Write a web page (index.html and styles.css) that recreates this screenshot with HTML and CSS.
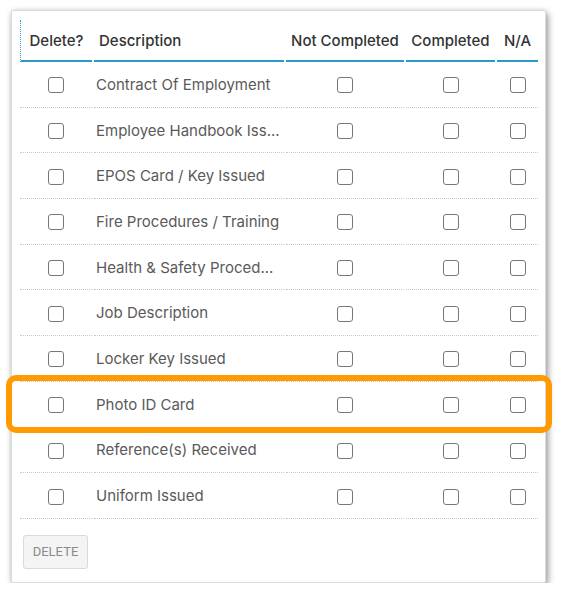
FILE: index.html
```html
<!DOCTYPE html>
<html lang="en">
<head>
  <meta charset="UTF-8" />
  <meta name="viewport" content="width=device-width, initial-scale=1.0" />
  <title>Induction Checklist</title>
  <link rel="stylesheet" href="styles.css">
</head>
<body>
  <div class="card">
    <table class="checklist">
      <colgroup>
        <col class="col-delete">
        <col class="col-desc">
        <col class="col-not">
        <col class="col-done">
        <col class="col-na">
      </colgroup>
      <thead>
        <tr>
          <th class="th-delete">Delete?</th>
          <th class="th-desc">Description</th>
          <th>Not Completed</th>
          <th>Completed</th>
          <th>N/A</th>
        </tr>
      </thead>
      <tbody>
        <tr>
          <td><input type="checkbox" class="check"></td>
          <td class="desc">Contract Of Employment</td>
          <td><input type="checkbox" class="check"></td>
          <td><input type="checkbox" class="check"></td>
          <td><input type="checkbox" class="check"></td>
        </tr>
        <tr>
          <td><input type="checkbox" class="check"></td>
          <td class="desc" title="Employee Handbook Issued">Employee Handbook Iss...</td>
          <td><input type="checkbox" class="check"></td>
          <td><input type="checkbox" class="check"></td>
          <td><input type="checkbox" class="check"></td>
        </tr>
        <tr>
          <td><input type="checkbox" class="check"></td>
          <td class="desc">EPOS Card / Key Issued</td>
          <td><input type="checkbox" class="check"></td>
          <td><input type="checkbox" class="check"></td>
          <td><input type="checkbox" class="check"></td>
        </tr>
        <tr>
          <td><input type="checkbox" class="check"></td>
          <td class="desc">Fire Procedures / Training</td>
          <td><input type="checkbox" class="check"></td>
          <td><input type="checkbox" class="check"></td>
          <td><input type="checkbox" class="check"></td>
        </tr>
        <tr>
          <td><input type="checkbox" class="check"></td>
          <td class="desc" title="Health &amp; Safety Procedures">Health &amp; Safety Proced...</td>
          <td><input type="checkbox" class="check"></td>
          <td><input type="checkbox" class="check"></td>
          <td><input type="checkbox" class="check"></td>
        </tr>
        <tr>
          <td><input type="checkbox" class="check"></td>
          <td class="desc">Job Description</td>
          <td><input type="checkbox" class="check"></td>
          <td><input type="checkbox" class="check"></td>
          <td><input type="checkbox" class="check"></td>
        </tr>
        <tr>
          <td><input type="checkbox" class="check"></td>
          <td class="desc">Locker Key Issued</td>
          <td><input type="checkbox" class="check"></td>
          <td><input type="checkbox" class="check"></td>
          <td><input type="checkbox" class="check"></td>
        </tr>
        <tr>
          <td><input type="checkbox" class="check"></td>
          <td class="desc">Photo ID Card</td>
          <td><input type="checkbox" class="check"></td>
          <td><input type="checkbox" class="check"></td>
          <td><input type="checkbox" class="check"></td>
        </tr>
        <tr>
          <td><input type="checkbox" class="check"></td>
          <td class="desc">Reference(s) Received</td>
          <td><input type="checkbox" class="check"></td>
          <td><input type="checkbox" class="check"></td>
          <td><input type="checkbox" class="check"></td>
        </tr>
        <tr>
          <td><input type="checkbox" class="check"></td>
          <td class="desc">Uniform Issued</td>
          <td><input type="checkbox" class="check"></td>
          <td><input type="checkbox" class="check"></td>
          <td><input type="checkbox" class="check"></td>
        </tr>
      </tbody>
    </table>

    <button class="delete-btn" disabled>DELETE</button>

    <!-- callout around the Photo ID Card row -->
    <div class="highlight"></div>
  </div>
</body>
</html>
```

FILE: styles.css
```css
* {
  margin: 0;
  padding: 0;
  box-sizing: border-box;
}

body {
  font-family: Inter, "Noto Sans", sans-serif;
  background: #fff;
}

.card {
  position: relative;
  width: 535px;
  height: 573px;
  margin: 10px 0 0 11px;
  padding: 9px 6px 0 6px;
  background: #fff;
  border: 1px solid #dcdcdc;
  border-radius: 2px;
  box-shadow: 2px 3px 7px rgba(0, 0, 0, 0.4), 0 0 4px rgba(0, 0, 0, 0.08);
}

.checklist {
  width: 522px;
  table-layout: fixed;
  border-collapse: separate;
  border-spacing: 2px 0;
}

.col-delete { width: 72px; }
.col-desc { width: 190px; }
.col-not { width: 118px; }
.col-done { width: 89px; }
.col-na { width: 41px; }

.checklist th {
  height: 42px;
  padding: 0;
  font-size: 15px;
  font-weight: 500;
  color: #333;
  text-align: center;
  vertical-align: middle;
  white-space: nowrap;
  border-bottom: 2px solid #2b9bc6;
}

.checklist .th-delete {
  border-left: 1px dotted #2b9bc6;
}

.checklist .th-desc {
  text-align: left;
  padding-left: 5px;
}

.checklist td {
  height: 45.7px;
  padding: 0;
  text-align: center;
  vertical-align: middle;
  border-bottom: 1px dotted #c8c8c8;
}

.checklist td.desc {
  text-align: left;
  padding-left: 2px;
  font-size: 15px;
  color: #5a5a5a;
  white-space: nowrap;
}

.check {
  appearance: none;
  -webkit-appearance: none;
  display: block;
  width: 16px;
  height: 16px;
  margin: 0 auto;
  border: 1.5px solid #777;
  border-radius: 3px;
  background: #fff;
  position: relative;
  top: 1px;
}

.delete-btn {
  display: block;
  margin: 16px 0 0 5px;
  width: 65px;
  height: 34px;
  font-family: Roboto, "Liberation Sans", sans-serif;
  font-size: 13px;
  color: #8a8a8a;
  background: #f4f4f4;
  border: 1px solid #dadada;
  border-radius: 3px;
}

.highlight {
  position: absolute;
  top: 364px;
  left: -6px;
  width: 546px;
  height: 58px;
  border: 6px solid #ff9a00;
  border-radius: 10px;
  pointer-events: none;
}
```
